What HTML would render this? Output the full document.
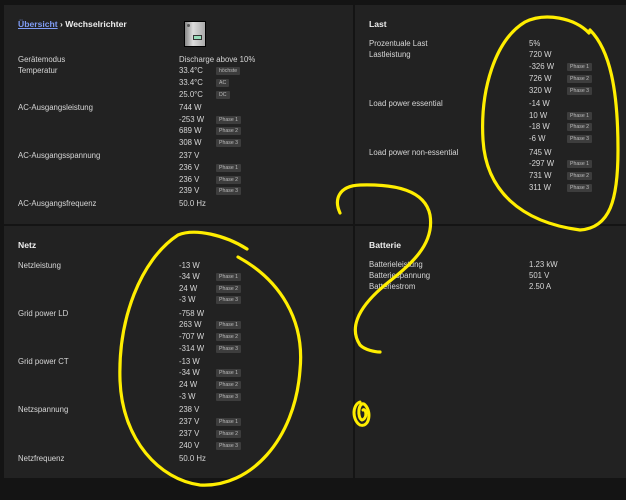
<!DOCTYPE html>
<html><head><meta charset="utf-8"><style>
*{margin:0;padding:0;box-sizing:border-box}
body{width:626px;height:500px;background:#141414;position:relative;overflow:hidden;font-family:"Liberation Sans","DejaVu Sans",sans-serif;font-size:7.8px;color:#d6d6d6}
.p{position:absolute;background:#222}
.t{position:absolute;line-height:10px;white-space:nowrap}
.h{font-weight:bold;font-size:8.6px;color:#eee}
.b{position:absolute;background:#3d3d3d;color:#bbb;font-size:5.2px;line-height:8px;height:8px;padding:0 3px;border-radius:1px;white-space:nowrap}
a{color:#7f9cf5}
svg{position:absolute;left:0;top:0}
</style></head><body>
<div class="p" style="left:4px;top:5px;width:349px;height:219px"></div>
<div class="p" style="left:355px;top:5px;width:271px;height:219px"></div>
<div class="p" style="left:4px;top:226px;width:349px;height:252px"></div>
<div class="p" style="left:355px;top:226px;width:271px;height:252px"></div>
<div style="position:absolute;left:184px;top:21px;width:22px;height:26px;background:linear-gradient(90deg,#888,#ddd 40%,#aaa);border:1px solid #000"><div style="position:absolute;left:8px;top:13px;width:9px;height:5px;background:#9db;border:1px solid #333"></div><div style="position:absolute;left:2px;top:2px;width:3px;height:3px;border-radius:50%;background:#555"></div></div>
<div id="c"></div>
<script>
const L=[];
function add(x,y,s,cls){L.push(`<div class="t ${cls||''}" style="left:${x}px;top:${y-5}px">${s}</div>`)}
function b(x,y,s){L.push(`<div class="b" style="left:${x}px;top:${y-4}px">${s}</div>`)}
add(18,24,'<a><u>Übersicht</u></a> › Wechselrichter','h');
const left=[[60,'Gerätemodus','Discharge above 10%'],[71,'Temperatur','33.4°C','höchste'],[83,'','33.4°C','AC'],[95,'','25.0°C','DC'],[108,'AC-Ausgangsleistung','744 W'],[120,'','-253 W','Phase 1'],[131,'','689 W','Phase 2'],[143,'','308 W','Phase 3'],[156,'AC-Ausgangsspannung','237 V'],[168,'','236 V','Phase 1'],[180,'','236 V','Phase 2'],[191,'','239 V','Phase 3'],[204,'AC-Ausgangsfrequenz','50.0 Hz']];
left.forEach(r=>{if(r[1])add(18,r[0],r[1]);add(179,r[0],r[2]);if(r[3])b(216,r[0],r[3])});
add(369,24,'Last','h');
const right=[[44,'Prozentuale Last','5%'],[55,'Lastleistung','720 W'],[67,'','-326 W','Phase 1'],[79,'','726 W','Phase 2'],[91,'','320 W','Phase 3'],[104,'Load power essential','-14 W'],[116,'','10 W','Phase 1'],[127,'','-18 W','Phase 2'],[139,'','-6 W','Phase 3'],[153,'Load power non-essential','745 W'],[164,'','-297 W','Phase 1'],[176,'','731 W','Phase 2'],[188,'','311 W','Phase 3']];
right.forEach(r=>{if(r[1])add(369,r[0],r[1]);add(529,r[0],r[2]);if(r[3])b(567,r[0],r[3])});
add(18,245,'Netz','h');
const n=[[266,'Netzleistung','-13 W'],[277,'','-34 W','Phase 1'],[289,'','24 W','Phase 2'],[300,'','-3 W','Phase 3'],[314,'Grid power LD','-758 W'],[325,'','263 W','Phase 1'],[337,'','-707 W','Phase 2'],[349,'','-314 W','Phase 3'],[362,'Grid power CT','-13 W'],[373,'','-34 W','Phase 1'],[385,'','24 W','Phase 2'],[397,'','-3 W','Phase 3'],[410,'Netzspannung','238 V'],[422,'','237 V','Phase 1'],[434,'','237 V','Phase 2'],[446,'','240 V','Phase 3'],[459,'Netzfrequenz','50.0 Hz']];
n.forEach(r=>{if(r[1])add(18,r[0],r[1]);add(179,r[0],r[2]);if(r[3])b(216,r[0],r[3])});
add(369,245,'Batterie','h');
[[265,'Batterieleistung','1.23 kW'],[276,'Batteriespannung','501 V'],[287,'Batteriestrom','2.50 A']].forEach(r=>{add(369,r[0],r[1]);add(529,r[0],r[2])});
document.getElementById('c').innerHTML=L.join('');
</script>
<svg width="626" height="500" fill="none" stroke="#ffee00" stroke-width="3.2" stroke-linecap="round">
<path d="M589 33 C575 18 545 12 525 22 C495 40 480 90 483 140 C486 190 520 222 580 230 C610 228 618 200 618 150 C618 90 610 50 590 30"/>
<path d="M247 249 C225 235 195 228 178 235 C140 260 118 320 120 380 C122 440 160 480 200 485 C250 488 295 440 300 370 C305 320 280 280 238 257"/>
<path d="M340 213 C334 200 338 186 360 185 C395 184 425 190 430 215 C435 245 410 265 385 285 C355 310 350 330 360 345 C365 350 375 352 380 352"/>
<path d="M360 402 C352 405 352 420 360 425 C370 428 372 410 364 404 C358 402 357 418 362 420 C368 418 366 408 363 410" stroke-width="3"/>
</svg>
</body></html>
